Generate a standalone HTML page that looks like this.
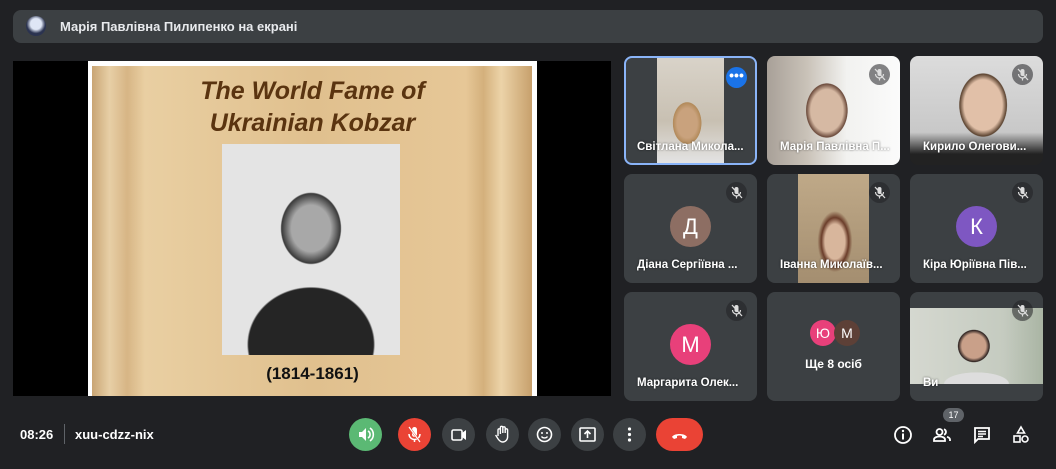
<!DOCTYPE html>
<html><head><meta charset="utf-8"><style>
*{margin:0;padding:0;box-sizing:border-box}
body{width:1056px;height:469px;background:#202124;font-family:"Liberation Sans",sans-serif;color:#fff;position:relative;overflow:hidden}
.abs{position:absolute}
.top{left:13px;top:10px;width:1030px;height:33px;background:#3c4043;border-radius:8px}
.top span{position:absolute;left:47px;top:9px;font-size:13px;font-weight:bold;color:#e8eaed}
.av0{left:26px;top:16px;width:20px;height:20px;border-radius:50%;background:radial-gradient(circle at 50% 40%,#dfe6f5 0 35%,#2b3350 60%)}
.main{left:13px;top:61px;width:598px;height:335px;background:#000}
.slide{left:88px;top:61px;width:449px;height:335px;background:#fff}
.scroll{left:92px;top:66px;width:440px;height:330px;background:linear-gradient(90deg,#c9a574 0,#e7cfa6 4%,#d7b585 8%,#e9cfa2 12%,#e0c08e 50%,#e6c797 85%,#d4b07c 89%,#ecd3a8 93%,#c7a06c 100%)}
.title{left:96px;top:75px;width:433px;text-align:center;font-style:italic;font-weight:bold;color:#5a3410;font-size:25px;line-height:32px}
.photo{left:222px;top:144px;width:178px;height:211px;background:radial-gradient(ellipse 22% 22% at 50% 40%,#a8a8a8 0 50%,#3a3a3a 75%,transparent 78%),radial-gradient(ellipse 50% 38% at 50% 95%,#252525 0 70%,transparent 72%),#e4e4e4}
.years{left:96px;top:364px;width:433px;text-align:center;font-weight:bold;color:#111;font-size:17px}
.tile{position:absolute;width:133px;height:109px;background:#3c4043;border-radius:8px;overflow:hidden}
.name{position:absolute;left:13px;bottom:12px;font-size:11.5px;font-weight:bold;color:#fff;white-space:nowrap;text-shadow:0 0 2px rgba(0,0,0,.6)}
.mic{position:absolute;right:10px;top:8px;width:21px;height:21px;border-radius:50%;background:rgba(32,33,36,.55)}
.mic svg{position:absolute;left:0;top:0}
.av{position:absolute;left:46px;top:32px;width:41px;height:41px;border-radius:50%;font-size:22px;text-align:center;line-height:41px}
.btn{position:absolute;top:418px;width:33px;height:33px;border-radius:50%;background:#3c4043}
.ic{position:absolute;top:425px;width:20px;height:20px}
</style></head><body>
<div class="abs top"><span>Марія Павлівна Пилипенко на екрані</span></div>
<div class="abs av0"></div>

<div class="abs main"></div>
<div class="abs slide"></div>
<div class="abs scroll"></div>
<div class="abs title">The World Fame of<br>Ukrainian Kobzar</div>
<div class="abs photo"></div>
<div class="abs years">(1814-1861)</div>

<!-- row 1 -->
<div class="tile" style="left:624px;top:56px;border:2px solid #8ab4f8;background:#3c4043">
 <div class="abs" style="left:31px;top:0;width:67px;height:105px;background:radial-gradient(ellipse 30% 28% at 45% 62%,#c9a27d 0 50%,#b28a5a 70%,transparent 72%),linear-gradient(#d9d3c9,#c8c0b2 60%,#e3e3e3)"></div>
 <div class="abs" style="right:8px;top:9px;width:21px;height:21px;border-radius:50%;background:#1a73e8;text-align:center;color:#fff;font-size:14px;line-height:16px;font-weight:bold">•••</div>
 <div class="name" style="left:11px;bottom:10px">Світлана Микола...</div>
</div>
<div class="tile" style="left:767px;top:56px;background:radial-gradient(ellipse 22% 35% at 45% 50%,#d6b9a3 0 55%,#6b4a3b 70%,transparent 72%),linear-gradient(90deg,#a8a098 0,#c9c2b8 30%,#f2f2f0 60%,#fbfbfb)">
 <div class="mic"><svg width="21" height="21"><rect x="8.5" y="5" width="4" height="7" rx="2" fill="#ddd"/><path d="M6.5 10a4 4 0 0 0 8 0M10.5 14v2.5" stroke="#ddd" stroke-width="1.2" fill="none"/><path d="M6 5l10 11" stroke="#ddd" stroke-width="1.3"/></svg></div><div class="name">Марія Павлівна П...</div></div>
<div class="tile" style="left:910px;top:56px;background:radial-gradient(ellipse 26% 42% at 55% 45%,#e1c0a8 0 55%,#5b4330 68%,transparent 70%),linear-gradient(#dcdcdc,#c8c8c8 70%,#222 90%)">
 <div class="mic"><svg width="21" height="21"><rect x="8.5" y="5" width="4" height="7" rx="2" fill="#ddd"/><path d="M6.5 10a4 4 0 0 0 8 0M10.5 14v2.5" stroke="#ddd" stroke-width="1.2" fill="none"/><path d="M6 5l10 11" stroke="#ddd" stroke-width="1.3"/></svg></div><div class="name">Кирило Олегови...</div></div>
<!-- row 2 -->
<div class="tile" style="left:624px;top:174px"><div class="mic"><svg width="21" height="21"><rect x="8.5" y="5" width="4" height="7" rx="2" fill="#ddd"/><path d="M6.5 10a4 4 0 0 0 8 0M10.5 14v2.5" stroke="#ddd" stroke-width="1.2" fill="none"/><path d="M6 5l10 11" stroke="#ddd" stroke-width="1.3"/></svg></div><div class="av" style="background:#8d6e63">Д</div><div class="name">Діана Сергіївна ...</div></div>
<div class="tile" style="left:767px;top:174px">
 <div class="abs" style="left:31px;top:0;width:71px;height:109px;background:radial-gradient(ellipse 35% 40% at 52% 62%,#d8b69c 0 40%,#6b3d2a 55%,transparent 70%),linear-gradient(#bfa988,#a48e70)"></div>
 <div class="mic"><svg width="21" height="21"><rect x="8.5" y="5" width="4" height="7" rx="2" fill="#ddd"/><path d="M6.5 10a4 4 0 0 0 8 0M10.5 14v2.5" stroke="#ddd" stroke-width="1.2" fill="none"/><path d="M6 5l10 11" stroke="#ddd" stroke-width="1.3"/></svg></div><div class="name">Іванна Миколаїв...</div></div>
<div class="tile" style="left:910px;top:174px"><div class="mic"><svg width="21" height="21"><rect x="8.5" y="5" width="4" height="7" rx="2" fill="#ddd"/><path d="M6.5 10a4 4 0 0 0 8 0M10.5 14v2.5" stroke="#ddd" stroke-width="1.2" fill="none"/><path d="M6 5l10 11" stroke="#ddd" stroke-width="1.3"/></svg></div><div class="av" style="background:#7e57c2">К</div><div class="name">Кіра Юріївна Пів...</div></div>
<!-- row 3 -->
<div class="tile" style="left:624px;top:292px"><div class="mic"><svg width="21" height="21"><rect x="8.5" y="5" width="4" height="7" rx="2" fill="#ddd"/><path d="M6.5 10a4 4 0 0 0 8 0M10.5 14v2.5" stroke="#ddd" stroke-width="1.2" fill="none"/><path d="M6 5l10 11" stroke="#ddd" stroke-width="1.3"/></svg></div><div class="av" style="background:#e8407a">М</div><div class="name">Маргарита Олек...</div></div>
<div class="tile" style="left:767px;top:292px">
 <div class="abs" style="left:43px;top:28px;width:26px;height:26px;border-radius:50%;background:#e8407a;font-size:14px;text-align:center;line-height:26px">Ю</div>
 <div class="abs" style="left:67px;top:28px;width:26px;height:26px;border-radius:50%;background:#5d4037;font-size:14px;text-align:center;line-height:26px">М</div>
 <div class="abs" style="left:0;top:65px;width:133px;text-align:center;font-size:12px;font-weight:bold">Ще 8 осіб</div></div>
<div class="tile" style="left:910px;top:292px">
 <div class="abs" style="left:0;top:16px;width:133px;height:76px;background:radial-gradient(ellipse 18% 32% at 48% 50%,#c9a089 0 50%,#2d2220 65%,transparent 68%),radial-gradient(ellipse 40% 25% at 50% 100%,#ddd 0 60%,transparent 62%),linear-gradient(90deg,#d5d8d0,#c5cbc0 70%,#aab5a4)"></div>
 <div class="mic"><svg width="21" height="21"><rect x="8.5" y="5" width="4" height="7" rx="2" fill="#ddd"/><path d="M6.5 10a4 4 0 0 0 8 0M10.5 14v2.5" stroke="#ddd" stroke-width="1.2" fill="none"/><path d="M6 5l10 11" stroke="#ddd" stroke-width="1.3"/></svg></div><div class="name">Ви</div></div>

<!-- bottom -->
<div class="abs" style="left:20px;top:427px;font-size:13px;font-weight:bold">08:26</div>
<div class="abs" style="left:64px;top:424px;width:1px;height:20px;background:#5f6368"></div>
<div class="abs" style="left:75px;top:427px;font-size:13px;font-weight:bold">xuu-cdzz-nix</div>

<div class="btn" style="left:349px;background:#5bb974"><svg width="33" height="33"><path d="M10 14h3l4-4v13l-4-4h-3z" fill="#fff"/><path d="M19 13a4 4 0 0 1 0 7M21 10a8 8 0 0 1 0 13" stroke="#fff" stroke-width="1.6" fill="none"/></svg></div>
<div class="btn" style="left:398px;background:#ea4335"><svg width="33" height="33"><rect x="14" y="9" width="5" height="10" rx="2.5" fill="#fff"/><path d="M11 16a5.5 5.5 0 0 0 11 0M16.5 21v3" stroke="#fff" stroke-width="1.5" fill="none"/><path d="M11 9l11 15" stroke="#ea4335" stroke-width="2"/><path d="M11 9l11 15" stroke="#fff" stroke-width="1.2"/></svg></div>
<div class="btn" style="left:442px"><svg width="33" height="33"><rect x="10" y="12" width="10" height="10" rx="1.5" stroke="#fff" stroke-width="1.6" fill="none"/><path d="M20 15l4-3v10l-4-3z" fill="#fff"/></svg></div>
<div class="btn" style="left:486px"><svg width="33" height="33"><path d="M12 18v-6a1.2 1.2 0 0 1 2.4 0v4M14.4 15V9.5a1.2 1.2 0 0 1 2.4 0V15M16.8 15V10a1.2 1.2 0 0 1 2.4 0v5M19.2 15v-3a1.2 1.2 0 0 1 2.4 0v7a5 5 0 0 1-5 5c-2 0-3-1-4.5-3l-2.5-4" stroke="#fff" stroke-width="1.4" fill="none"/></svg></div>
<div class="btn" style="left:528px"><svg width="33" height="33"><circle cx="16.5" cy="16.5" r="7" stroke="#fff" stroke-width="1.6" fill="none"/><circle cx="14" cy="15" r="1" fill="#fff"/><circle cx="19" cy="15" r="1" fill="#fff"/><path d="M13.5 18.5a3.5 3 0 0 0 6 0" stroke="#fff" stroke-width="1.4" fill="none"/></svg></div>
<div class="btn" style="left:571px"><svg width="33" height="33"><rect x="9" y="10" width="15" height="13" rx="1" stroke="#fff" stroke-width="1.6" fill="none"/><path d="M16.5 20v-6M13.5 16l3-3 3 3" stroke="#fff" stroke-width="1.6" fill="none"/></svg></div>
<div class="btn" style="left:613px"><svg width="33" height="33"><circle cx="16.5" cy="11" r="1.6" fill="#fff"/><circle cx="16.5" cy="16.5" r="1.6" fill="#fff"/><circle cx="16.5" cy="22" r="1.6" fill="#fff"/></svg></div>
<div class="btn" style="left:656px;width:47px;border-radius:17px;background:#ea4335"><svg width="47" height="33"><path d="M16 19c2-4 13-4 15 0l-2 2-3-1v-2c-2-.6-3-.6-5 0v2l-3 1z" fill="#fff"/></svg></div>

<svg class="ic" style="left:893px" viewBox="0 0 20 20"><circle cx="10" cy="10" r="8" stroke="#fff" stroke-width="1.8" fill="none"/><rect x="9" y="8.5" width="2" height="6" fill="#fff"/><circle cx="10" cy="6" r="1.2" fill="#fff"/></svg>
<div class="abs" style="left:943px;top:408px;width:21px;height:14px;border-radius:7px;background:#5f6368;font-size:9px;text-align:center;line-height:14px">17</div>
<svg class="ic" style="left:932px" viewBox="0 0 20 20"><circle cx="7.5" cy="7" r="3" stroke="#fff" stroke-width="1.8" fill="none"/><path d="M2 16v-1.5c0-2 3-3 5.5-3s5.5 1 5.5 3V16z" stroke="#fff" stroke-width="1.8" fill="none"/><path d="M12 4.2a3 3 0 0 1 0 5.6M15 11.8c1.8.6 3 1.5 3 2.7V16" stroke="#fff" stroke-width="1.8" fill="none"/></svg>
<svg class="ic" style="left:972px" viewBox="0 0 20 20"><path d="M3 3h14v11H6l-3 3z" stroke="#fff" stroke-width="1.8" fill="none"/><path d="M6 6.5h8M6 9h8M6 11.5h5" stroke="#fff" stroke-width="1.5"/></svg>
<svg class="ic" style="left:1011px" viewBox="0 0 20 20"><path d="M10 2l3.5 6h-7z" stroke="#fff" stroke-width="1.6" fill="none"/><rect x="3" y="11" width="6" height="6" stroke="#fff" stroke-width="1.6" fill="none"/><circle cx="14" cy="14" r="3" stroke="#fff" stroke-width="1.6" fill="none"/></svg>
</body></html>
